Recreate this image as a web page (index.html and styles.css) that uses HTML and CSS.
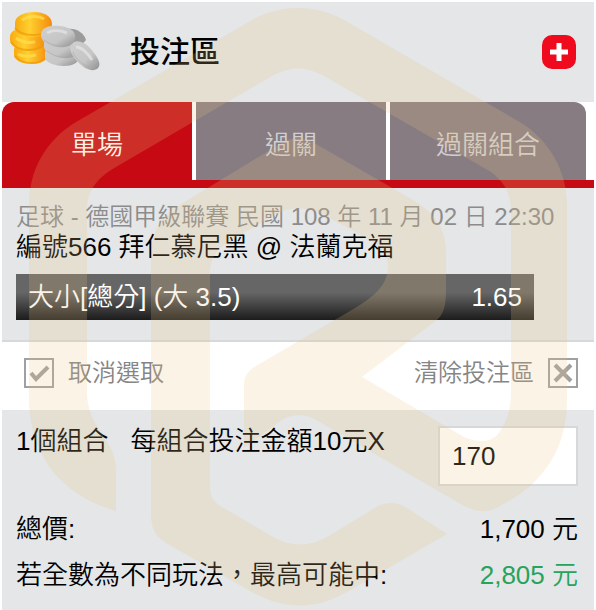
FILE: index.html
```html
<!DOCTYPE html>
<html lang="zh-Hant">
<head>
    <meta charset="UTF-8">
    <meta name="viewport" content="width=device-width, initial-scale=1.0">
    <title>投注區</title>
    <link rel="stylesheet" href="styles.css">
</head>
<body>
    <div class="bet-slip">
        <header class="slip-header">
            <svg class="coins" viewBox="0 0 92 60" aria-hidden="true">
                <defs>
                    <linearGradient id="gold" x1="0" x2="1" y1="0" y2="0">
                        <stop offset="0" stop-color="#f8aa10"/>
                        <stop offset="0.4" stop-color="#ffd030"/>
                        <stop offset="1" stop-color="#f58a0c"/>
                    </linearGradient>
                    <linearGradient id="silver" x1="0" x2="1" y1="0" y2="1">
                        <stop offset="0" stop-color="#cfcfcf"/>
                        <stop offset="0.6" stop-color="#c6c6c6"/>
                        <stop offset="1" stop-color="#8d8d8d"/>
                    </linearGradient>
                </defs>
                <!-- gold stack -->
                <g fill="url(#gold)">
                    <path d="M4 38c0-6 8-9 18-9s17 3 17 10c0 8-7 13-18 13S4 47 4 43z"/>
                    <path d="M0 25c0-7 8-9 18-9s18 3 18 11-7 12-17 12S0 34 0 28z"/>
                    <path d="M5 11C5 4 14 0 24 0s18 4 18 12c0 9-8 13-19 13S4 20 5 14z"/>
                </g>
                <g fill="none" stroke="#f09a08" stroke-width="2" opacity="0.7">
                    <path d="M5 16c4 6 11 7 18 7s14-2 18-7"/>
                    <path d="M1 30c4 6 11 8 17 8s12-2 16-5"/>
                    <path d="M5 44c4 6 11 7 17 7s11-2 14-5"/>
                </g>
                <g fill="none" stroke="#ffe050" stroke-width="3" opacity="0.7">
                    <path d="M12 8c6-4 16-5 22-1"/>
                    <path d="M6 26c5 4 12 5 19 4M8 42c5 3 11 3 18 1"/>
                </g>
                <!-- silver pile -->
                <g fill="url(#silver)">
                    <path d="M35 40c2-5 11-7 19-6s15 5 15 11-7 9-15 9-18-3-19-8z"/>
                    <path d="M34 29c3-4 10-5 18-4s16 5 16 12-6 10-15 9-18-5-19-11z"/>
                    <path d="M58 17c8-1 16 4 18 11l-8 9-14-9z" fill="#9b9b9b"/>
                    <path d="M31 22c1-7 9-9 19-8s17 6 15 13-9 9-18 8-17-6-16-13z"/>
                    <path d="M61 33c3-6 12-5 19 3s12 16 8 20-11 2-17-3-13-14-10-20z"/>
                </g>
                <g fill="none" stroke="#e2e2e2" stroke-width="3" opacity="0.8">
                    <path d="M37 21c5-3 13-3 20 0M66 35c5 0 12 6 16 13"/>
                </g>
                <g fill="none" stroke="#a8a8a8" stroke-width="1" opacity="0.6">
                    <path d="M34 28c7 6 19 8 29 3M37 39c7 6 19 8 26 5M63 40c3 9 14 16 22 16"/>
                </g>
            </svg>
            <h1 class="slip-title">投注區</h1>
            <button class="add-button" type="button" aria-label="新增">
                <svg viewBox="0 0 34 34" aria-hidden="true">
                    <path d="M17 8v18M8 17h18" stroke="#fff" stroke-width="5"/>
                </svg>
            </button>
        </header>

        <nav class="tabs">
            <button class="tab active" type="button">單場</button>
            <button class="tab" type="button">過關</button>
            <button class="tab" type="button">過關組合</button>
        </nav>

        <section class="match">
            <p class="match-info">足球 - 德國甲級聯賽 民國 108 年 11 月 02 日 22:30</p>
            <p class="match-name">編號566 拜仁慕尼黑 @ 法蘭克福</p>
            <div class="pick">
                <span>大小[總分] (大 3.5)</span>
                <span>1.65</span>
            </div>
        </section>

        <div class="actions">
            <label class="action" for="deselect">
                <input class="check" type="checkbox" id="deselect" checked>
                取消選取
            </label>
            <button class="action" type="button">
                清除投注區
                <svg class="clear-icon" viewBox="0 0 26 26" aria-hidden="true">
                    <path d="M5 5l16 16M21 5L5 21" stroke="#a0a0a0" stroke-width="4"/>
                </svg>
            </button>
        </div>

        <section class="stake">
            <div class="stake-row">
                <label class="stake-label" for="amount">
                    <span>1個組合</span>
                    <span>每組合投注金額10元X</span>
                </label>
                <input class="amount" type="text" id="amount" value="170">
            </div>
            <div class="sum-row">
                <span>總價:</span>
                <span>1,700 元</span>
            </div>
            <div class="sum-row">
                <span>若全數為不同玩法，最高可能中:</span>
                <span class="payout">2,805 元</span>
            </div>
        </section>

        <!-- translucent logo over the whole slip -->
        <svg class="watermark" viewBox="0 0 596 610" aria-hidden="true">
            <path d="M116 511C60 495 30 455 29 400V205C29 170 46 140 76 122L252 20C280 4 316 4 344 20L518 121C548 138 567 170 567 205V400C567 450 542 485 500 506C486 514 478 512 464 506L318 421C306 413 292 413 280 421L244 448V385C244 376 248 371 256 366L350 311C376 296 388 284 388 266C388 254 382 247 372 241L324 215C306 206 290 206 274 215L230 241C217 249 210 258 210 273V487C210 496 213 502 222 507L273 537C291 547 309 547 327 537L370 511C382 502 394 500 407 508L447 534L347 592C316 610 284 610 250 591L166 543C156 537 151 528 151 515V255C151 235 160 217 178 206L280 144C292 136 304 136 316 144L408 197C434 211 446 228 446 252V290C446 306 444 316 434 322L362 377L464 437C480 444 494 442 500 431C507 420 511 410 511 392V210C511 192 502 178 486 169L324 76C306 66 290 66 272 76L116 167C98 177 87 190 87 210V395C88 412 94 422 102 434C111 447 116 456 116 473Z"/>
        </svg>
    </div>
</body>
</html>
```
FILE: styles.css
```css
* {
    margin: 0;
    padding: 0;
    box-sizing: border-box;
}

body {
    font-family: "Liberation Sans", "Noto Sans CJK TC", sans-serif;
    font-size: 26px;
    font-weight: 350;
    line-height: 30px;
    background-color: #fff;
    color: #000;
    padding: 2px 2px 0;
}

button,
input {
    font: inherit;
    color: inherit;
    border: none;
    background: none;
}

button {
    cursor: pointer;
}

.slip-header {
    display: flex;
    align-items: center;
    height: 100px;
    padding: 0 18px 0 8px;
    background-color: #e4e6e8;
}

.coins {
    width: 92px;
    height: 60px;
    margin: 10px 28px 0 0;
    align-self: flex-start;
}

.slip-title {
    flex: 1;
    font-size: 30px;
    font-weight: 500;
}

.add-button {
    width: 34px;
    height: 34px;
    border-radius: 10px;
    background-color: #ef0a1e;
}

.add-button svg {
    display: block;
}

/* Tabs */
.tabs {
    display: flex;
    gap: 4px;
    padding-right: 8px;
    height: 86px;
    background: linear-gradient(#c60912, #c60912) bottom / 100% 8px no-repeat;
}

.tab {
    flex: 1 1 190px;
    height: 78px;
    padding-top: 8px;
    background-color: #877c82;
    color: #d2cfd1;
}

.tab.active {
    background-color: #c60912;
    color: #fff;
    border-top-left-radius: 12px;
}

.tab:last-child {
    flex-basis: 196px;
    border-top-right-radius: 12px;
}

/* Selected match */
.match {
    padding: 14px 14px 20px;
    background-color: #e4e6e8;
    border-bottom: 2px solid #d6d8da;
}

.match-info {
    font-size: 24px;
    color: #8c8c8c;
}

.pick {
    display: flex;
    justify-content: space-between;
    margin: 12px 46px 0 0;
    padding: 8px 12px;
    background: linear-gradient(#666 40%, #1c1c1c);
    color: #fff;
}

.actions {
    display: flex;
    justify-content: space-between;
    align-items: center;
    height: 68px;
    padding: 0 16px 6px 22px;
    font-size: 24px;
    color: #858585;
}

.action {
    display: flex;
    align-items: center;
    gap: 14px;
}

.check,
.clear-icon {
    width: 30px;
    height: 30px;
    border: 2px solid #a0a0a0;
}

.check {
    appearance: none;
    background: url("data:image/svg+xml,%3Csvg xmlns='http://www.w3.org/2000/svg' viewBox='0 0 26 26'%3E%3Cpath d='M5 13l5 6L22 7' fill='none' stroke='%23a0a0a0' stroke-width='4'/%3E%3C/svg%3E") center / 26px no-repeat;
}

/* Stake and totals */
.stake {
    padding: 16px 16px 12px 14px;
    background-color: #e4e6e8;
}

.stake-row {
    display: flex;
    justify-content: space-between;
    align-items: flex-start;
    margin-bottom: 20px;
}

.stake-label {
    display: flex;
    gap: 22px;
}

.amount {
    width: 140px;
    height: 60px;
    padding: 0 12px;
    border: 2px solid #d6d8da;
    background-color: #fff;
}

.sum-row {
    display: flex;
    justify-content: space-between;
    line-height: 46px;
}

.payout {
    color: #27a35c;
}

.watermark {
    position: absolute;
    top: 0;
    left: 0;
    width: 100%;
    fill: rgba(235, 195, 125, 0.2);
    pointer-events: none;
}
```
